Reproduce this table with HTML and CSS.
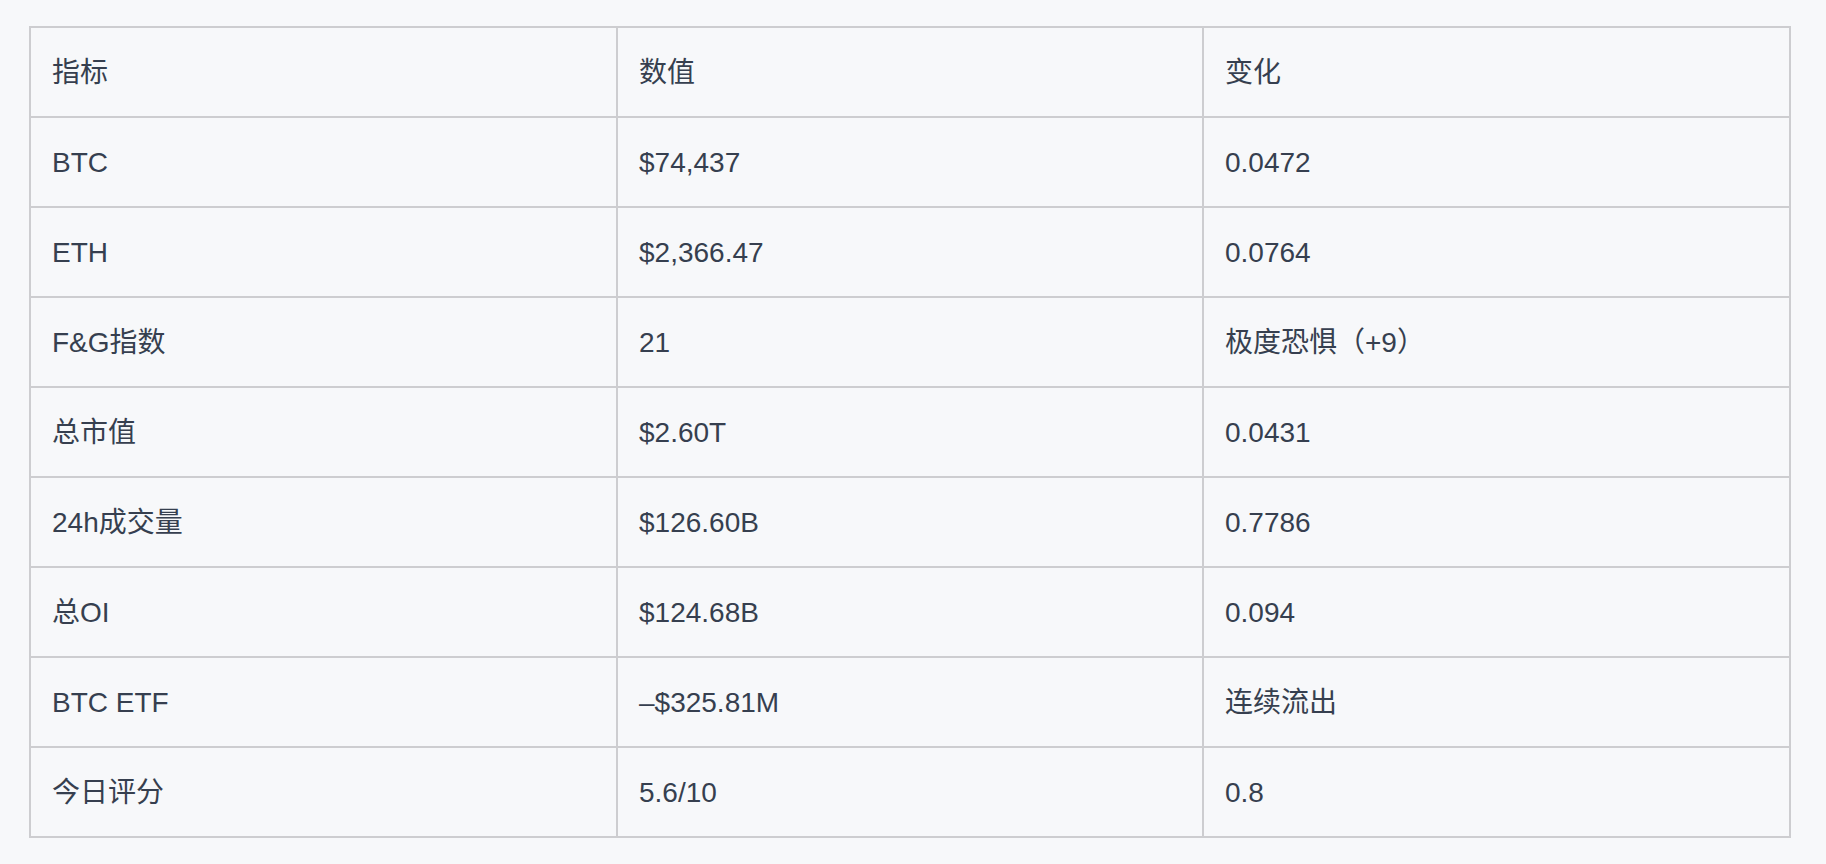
FILE: index.html
```html
<!DOCTYPE html>
<html lang="zh-CN">
<head>
<meta charset="utf-8">
<title>市场指标</title>
<link rel="stylesheet" href="styles.css">
</head>
<body>
<div class="page">
  <div class="table" role="table">
    <div class="cell">指标</div><div class="cell">数值</div><div class="cell">变化</div>
    <div class="cell">BTC</div><div class="cell">$74,437</div><div class="cell">0.0472</div>
    <div class="cell">ETH</div><div class="cell">$2,366.47</div><div class="cell">0.0764</div>
    <div class="cell">F&amp;G指数</div><div class="cell">21</div><div class="cell">极度恐惧（+9）</div>
    <div class="cell">总市值</div><div class="cell">$2.60T</div><div class="cell">0.0431</div>
    <div class="cell">24h成交量</div><div class="cell">$126.60B</div><div class="cell">0.7786</div>
    <div class="cell">总OI</div><div class="cell">$124.68B</div><div class="cell">0.094</div>
    <div class="cell">BTC ETF</div><div class="cell">–$325.81M</div><div class="cell">连续流出</div>
    <div class="cell">今日评分</div><div class="cell">5.6/10</div><div class="cell">0.8</div>
  </div>
</div>
</body>
</html>
```

FILE: styles.css
```css
html, body {
  margin: 0;
  padding: 0;
  background: #f7f8fa;
}
body {
  font-family: "Liberation Sans", "Noto Sans CJK SC", sans-serif;
  color: #363f4f;
  font-size: 28px;
}
.page {
  padding: 26px 35px 28px 29px;
}
.table {
  display: grid;
  grid-template-columns: 587px 586px 587px;
  grid-auto-rows: 90px;
  width: 1760px;
  border-top: 2px solid #cdcdd0;
  border-left: 2px solid #cdcdd0;
}
.cell {
  display: flex;
  align-items: center;
  padding: 2px 20px 0 21px;
  border-right: 2px solid #cdcdd0;
  border-bottom: 2px solid #cdcdd0;
  white-space: nowrap;
  line-height: 1;
}
```
